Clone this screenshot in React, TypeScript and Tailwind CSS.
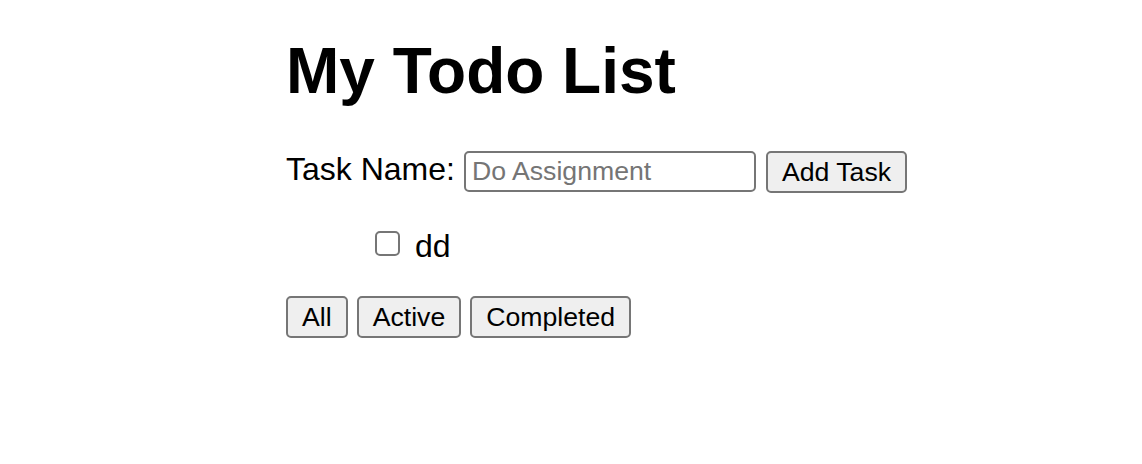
import { useState } from "react";

type Filter = "All" | "Active" | "Completed";

interface Task {
  id: number;
  name: string;
  done: boolean;
}

const FILTERS: Filter[] = ["All", "Active", "Completed"];

const btn =
  "h-[42px] px-[14px] bg-[#efefef] border-2 border-[#767676] rounded-[5px] text-[26.67px] leading-none text-black";

export default function App() {
  const [tasks, setTasks] = useState<Task[]>([{ id: 1, name: "dd", done: false }]);
  const [name, setName] = useState("");
  const [filter, setFilter] = useState<Filter>("All");

  const addTask = () => {
    if (!name.trim()) return;
    setTasks([...tasks, { id: Date.now(), name, done: false }]);
    setName("");
  };

  const shown = tasks.filter((t) =>
    filter === "All" ? true : filter === "Active" ? !t.done : t.done
  );

  return (
    <div
      className="min-h-[464px] bg-white pl-[286px] text-black"
      style={{ fontFamily: '"Liberation Sans", Arial, Helvetica, sans-serif' }}
    >
      <h1 className="pt-[34px] text-[64px] font-bold leading-[74px]">My Todo List</h1>

      <div className="mt-[43px] flex h-[41px] items-start">
        <label className="text-[32px] leading-[37px]">Task Name:</label>
        <input
          value={name}
          onChange={(e) => setName(e.target.value)}
          placeholder="Do Assignment"
          className="ml-[9px] h-[41px] w-[292px] border-2 border-[#767676] rounded-[5px] px-[6px] text-[26.67px] placeholder:text-[#757575] outline-none"
        />
        <button onClick={addTask} className={`ml-[10px] ${btn} h-[41px]`}>
          Add Task
        </button>
      </div>

      <ul className="mt-[32px] mb-[31px] pl-[89px]">
        {shown.map((t) => (
          <li key={t.id} className="flex items-start">
            <input
              type="checkbox"
              checked={t.done}
              onChange={() =>
                setTasks(tasks.map((x) => (x.id === t.id ? { ...x, done: !x.done } : x)))
              }
              className="mt-[7px] h-[25px] w-[25px] appearance-none border-2 border-[#767676] rounded-[5px] bg-white checked:bg-[#0075ff]"
            />
            <span className="mt-[4px] ml-[15px] text-[32px] leading-[37px]">{t.name}</span>
          </li>
        ))}
      </ul>

      <div className="flex gap-[9px]">
        {FILTERS.map((f) => (
          <button key={f} onClick={() => setFilter(f)} className={btn}>
            {f}
          </button>
        ))}
      </div>
    </div>
  );
}
